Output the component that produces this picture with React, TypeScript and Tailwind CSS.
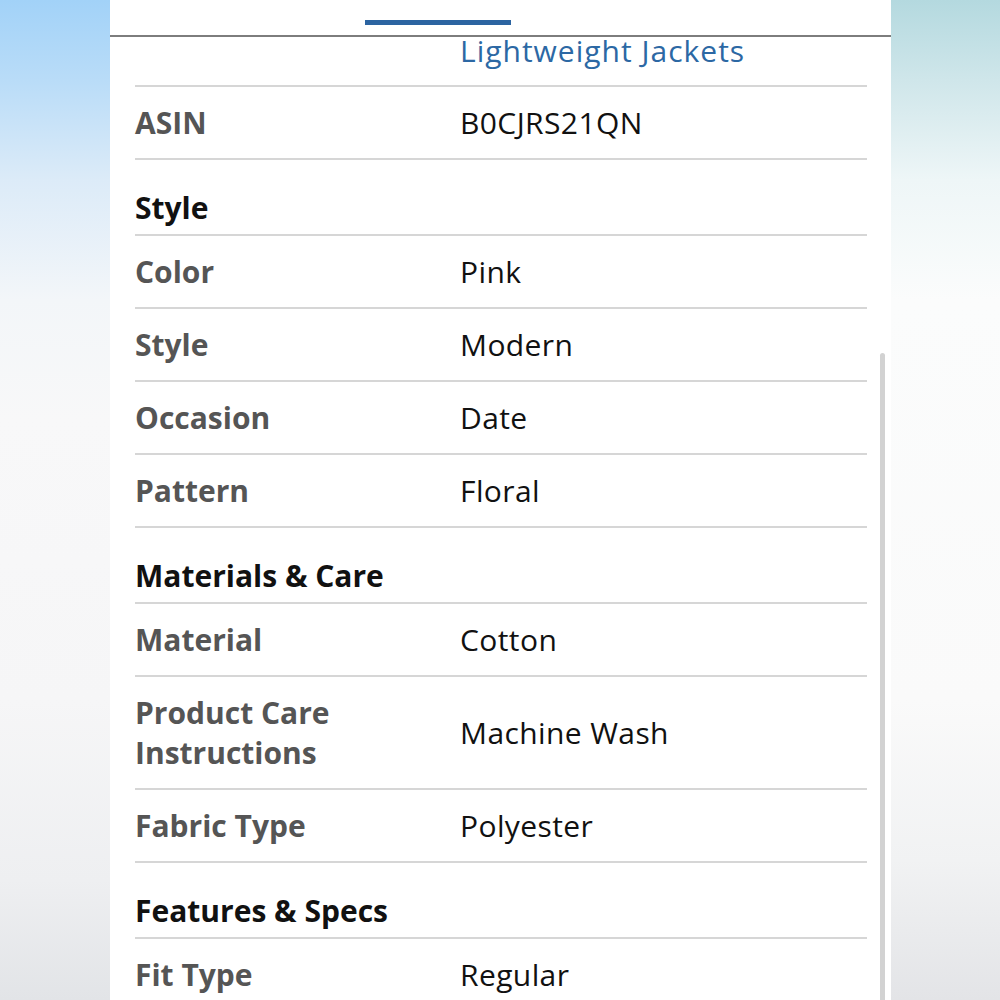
import React from 'react'

type Row =
  | { kind: 'head'; title: string }
  | { kind: 'item'; label: string; value: string; tall?: boolean }

const rows: Row[] = [
  { kind: 'item', label: 'ASIN', value: 'B0CJRS21QN' },
  { kind: 'head', title: 'Style' },
  { kind: 'item', label: 'Color', value: 'Pink' },
  { kind: 'item', label: 'Style', value: 'Modern' },
  { kind: 'item', label: 'Occasion', value: 'Date' },
  { kind: 'item', label: 'Pattern', value: 'Floral' },
  { kind: 'head', title: 'Materials & Care' },
  { kind: 'item', label: 'Material', value: 'Cotton' },
  { kind: 'item', label: 'Product Care Instructions', value: 'Machine Wash', tall: true },
  { kind: 'item', label: 'Fabric Type', value: 'Polyester' },
  { kind: 'head', title: 'Features & Specs' },
  { kind: 'item', label: 'Fit Type', value: 'Regular' },
]

function SpecRow({ row }: { row: Row }) {
  if (row.kind === 'head') {
    return (
      <div className="h-[76px] border-b-2 border-[#d6d6d6] pt-[28px]">
        <h3 className="text-[30px] font-bold leading-[40px] text-[#111]">{row.title}</h3>
      </div>
    )
  }
  return (
    <div
      className={`grid grid-cols-[325px_1fr] items-center border-b-2 border-[#d6d6d6] ${
        row.tall ? 'h-[113px]' : 'h-[73px]'
      }`}
    >
      <span className={`text-[30px] font-bold leading-[40px] text-[#555] ${row.tall ? 'w-[220px]' : ''}`}>
        {row.label}
      </span>
      <span className="text-[30px] leading-[40px] tracking-[0.4px] text-[#111]">{row.value}</span>
    </div>
  )
}

export default function App() {
  return (
    <div
      className="flex h-[1000px] w-[1000px] overflow-hidden"
      style={{ fontFamily: '"Open Sans", "Noto Sans", sans-serif' }}
    >
      <div className="w-[110px] shrink-0 bg-[linear-gradient(180deg,#a2d2f8_0%,#b9dcf8_8%,#dcebf8_18%,#f3f6f9_30%,#f8f8f9_42%,#f6f6f7_70%,#eeeff1_88%,#e2e4e7_100%)]" />

      <div className="relative flex w-[781px] shrink-0 flex-col bg-white">
        {/* tab strip */}
        <div className="h-[37px] shrink-0 border-b-2 border-[#7d7d7d] pl-[255px] pt-[20px]">
          <div className="h-[5px] w-[146px] bg-[#2c64a1]" />
        </div>

        <div className="pl-[25px] pr-[24px]">
          <div className="grid h-[50px] grid-cols-[325px_1fr] items-start border-b-2 border-[#d6d6d6]">
            <span />
            <span className="-mt-[6px] text-[30px] leading-[40px] tracking-[1px] text-[#2c68a4]">
              Lightweight Jackets
            </span>
          </div>
          {rows.map((r, i) => (
            <SpecRow key={i} row={r} />
          ))}
        </div>

        {/* scrollbar thumb */}
        <div className="absolute right-[6px] top-[353px] bottom-0 w-[5px] rounded-t-full bg-[#d2d2d2]" />
      </div>

      <div className="flex-1 bg-[linear-gradient(180deg,#b4d9df_0%,#cfe6ea_8%,#eef6f7_18%,#fbfcfc_30%,#fafafa_70%,#f1f2f3_86%,#e3e4e7_100%)]" />
    </div>
  )
}
